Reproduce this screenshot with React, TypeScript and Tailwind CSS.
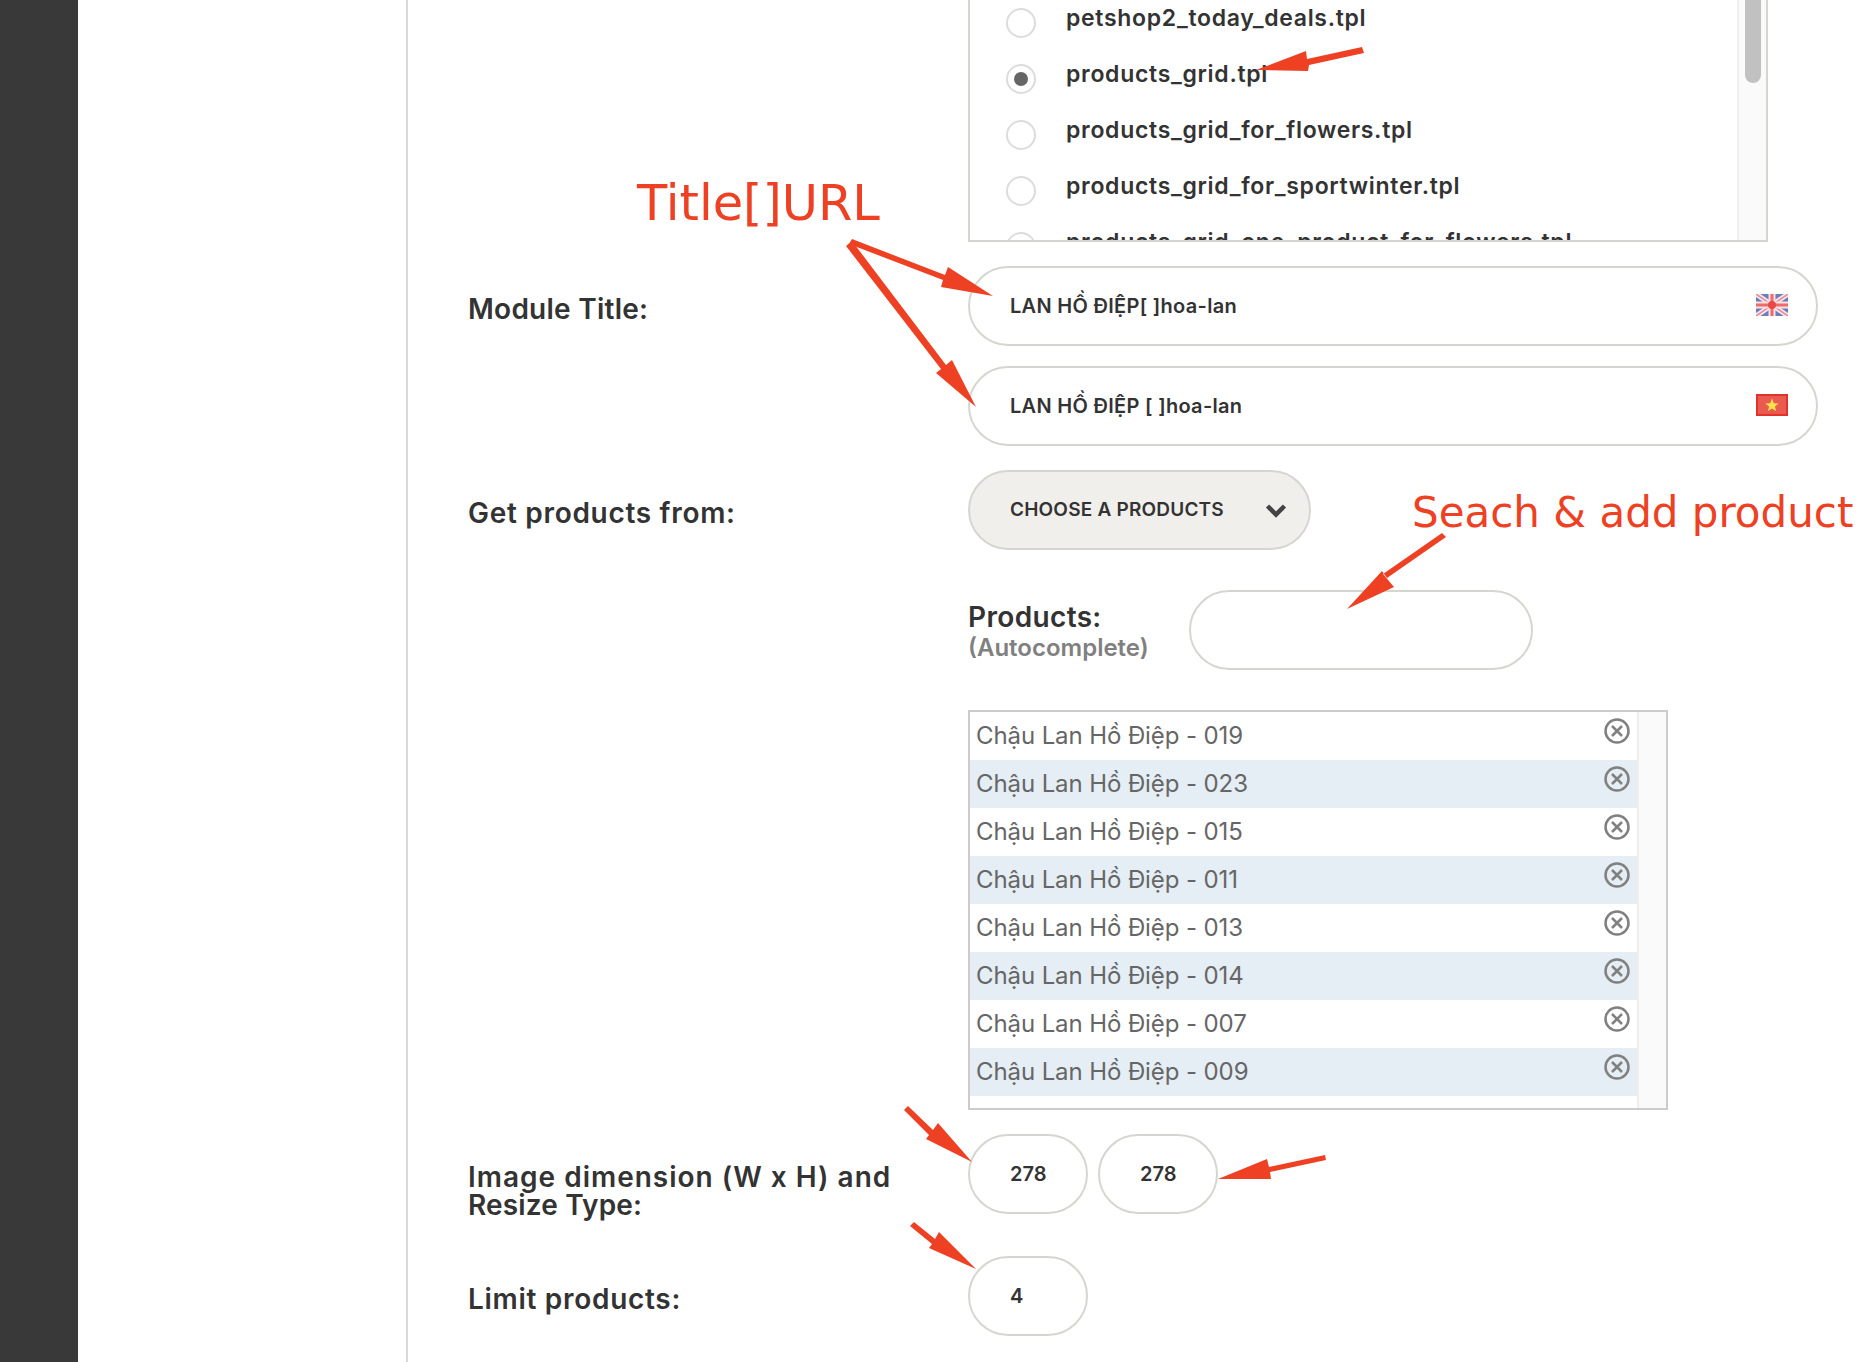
import React from "react";

const radios = [
  { name: "petshop2_today_deals.tpl" },
  { name: "products_grid.tpl", on: true },
  { name: "products_grid_for_flowers.tpl" },
  { name: "products_grid_for_sportwinter.tpl" },
  { name: "products_grid_one_product_for_flowers.tpl" },
];
const products = ["019", "023", "015", "011", "013", "014", "007", "009"];

function Flag({ kind }: { kind: "uk" | "vn" }) {
  if (kind === "vn") {
    return (
      <svg width="32" height="22" viewBox="0 0 32 22" className="-mt-[2px] shrink-0 blur-[0.4px]">
        <rect width="32" height="22" fill="#e2332a" />
        <rect x="2" y="2" width="28" height="18" fill="#ea5a50" />
        <polygon points="16,4.5 17.8,9.2 22.8,9.4 18.9,12.5 20.2,17.3 16,14.6 11.8,17.3 13.1,12.5 9.2,9.4 14.2,9.2" fill="#fbe24a" />
      </svg>
    );
  }
  return (
    <svg width="32" height="22" viewBox="0 0 32 22" className="-mt-[2px] shrink-0 blur-[0.6px]">
      <rect width="32" height="22" fill="#6f7cbc" />
      <path d="M0 0L32 22M32 0L0 22" stroke="#f3e6ea" strokeWidth="5" />
      <path d="M0 0L32 22M32 0L0 22" stroke="#ea8c9a" strokeWidth="1.5" />
      <path d="M16 0V22M0 11H32" stroke="#f7e3e3" strokeWidth="7" />
      <path d="M16 0V22M0 11H32" stroke="#ef6a6a" strokeWidth="3" />
      <circle cx="16" cy="11" r="4" fill="#e84a4a" />
    </svg>
  );
}

function Label({ children, className = "pt-[29px] tracking-[0.7px]" }: { children: React.ReactNode; className?: string }) {
  return (
    <div className={`w-[500px] shrink-0 text-[28px] leading-[28px] font-semibold text-[#333] ${className}`}>
      {children}
    </div>
  );
}

function Pill({ className, children }: { className: string; children?: React.ReactNode }) {
  return (
    <div className={`flex h-[80px] items-center rounded-[40px] border-2 border-[#d6d6d1] pl-[40px] text-[20px] font-semibold text-[#333] ${className}`}>
      {children}
    </div>
  );
}

function Arrow({ d }: { d: string }) {
  return <path d={d} fill="#ee4023" />;
}

export default function App() {
  return (
    <div className="relative flex h-[1362px] w-[1856px] overflow-hidden bg-white font-['Inter','Noto_Sans',sans-serif]">
      <div className="h-full w-[78px] shrink-0 bg-[#393939]" />
      <div className="h-full w-[330px] shrink-0 border-r-2 border-[#d9d9d9]" />
      <div className="flex-1 pl-[60px]">
        <div className="flex">
          <div className="w-[500px] shrink-0" />
          <div className="flex h-[242px] w-[800px] overflow-hidden border-x-2 border-b-2 border-[#d6d6d1]">
            <div className="-mt-[9px] flex-1 pl-[36px]">
              {radios.map((r) => (
                <div key={r.name} className="flex h-[56px] items-center gap-[30px] pb-[2px]">
                  <span className="mt-[10px] flex h-[30px] w-[30px] shrink-0 items-center justify-center rounded-full border-2 border-[#dcdcdc]">
                    {r.on && <span className="h-[14px] w-[14px] rounded-full bg-[#666]" />}
                  </span>
                  <span className="whitespace-nowrap text-[23px] font-semibold tracking-[0.7px] text-[#333]">{r.name}</span>
                </div>
              ))}
            </div>
            <div className="w-[29px] shrink-0 border-l-2 border-[#eeeeee] bg-[#fafafa] pl-[6px]">
              <div className="h-[83px] w-[16px] rounded-b-[8px] bg-[#c1c1c1]" />
            </div>
          </div>
        </div>

        <div className="mt-[24px] flex">
          <Label className="pt-[29px] tracking-[0.25px]">Module Title:</Label>
          <div className="flex flex-col gap-[20px]">
            <Pill className="w-[850px] justify-between pr-[28px]">
              <span className="tracking-[0.3px]">LAN HỒ ĐIỆP[ ]hoa-lan</span>
              <Flag kind="uk" />
            </Pill>
            <Pill className="w-[850px] justify-between pr-[28px]">
              <span className="tracking-[0.3px]">LAN HỒ ĐIỆP [ ]hoa-lan</span>
              <Flag kind="vn" />
            </Pill>
          </div>
        </div>

        <div className="mt-[24px] flex">
          <Label>Get products from:</Label>
          <Pill className="w-[343px] justify-between bg-[#f0efec] pr-[22px]">
            <span className="pt-[1px] text-[19px] tracking-[0.2px]">CHOOSE A PRODUCTS</span>
            <svg width="22" height="15" viewBox="0 0 22 15">
              <path d="M2.5 3L11 11.5L19.5 3" fill="none" stroke="#444" strokeWidth="4.5" />
            </svg>
          </Pill>
        </div>

        <div className="mt-[40px] ml-[500px] flex h-[80px] items-start">
          <div className="w-[221px] shrink-0 pt-[13px]">
            <div className="text-[28px] leading-[28px] font-semibold tracking-[0.35px] text-[#333]">Products:</div>
            <div className="mt-[3px] text-[24px] leading-[28px] font-semibold text-[#808080]">(Autocomplete)</div>
          </div>
          <Pill className="w-[344px]" />
        </div>

        <div className="mt-[40px] ml-[500px] flex h-[400px] w-[700px] border-2 border-[#cccccc]">
          <div className="flex-1">
            {products.map((p, i) => (
              <div key={p} className={`flex h-[48px] justify-between pl-[6px] pr-[7px] ${i % 2 ? "bg-[#e5edf5]" : "bg-white"}`}>
                <span className="pt-[8px] text-[24px] leading-[32px] tracking-[-0.1px] text-[#666]">Chậu Lan Hồ Điệp - {p}</span>
                <svg width="26" height="26" viewBox="0 0 26 26" className="mt-[6px]">
                  <circle cx="13" cy="13" r="11.5" fill="none" stroke="#808080" strokeWidth="2.5" />
                  <path d="M8 8L18 18M18 8L8 18" stroke="#808080" strokeWidth="2.5" />
                </svg>
              </div>
            ))}
          </div>
          <div className="w-[29px] shrink-0 border-l-2 border-[#eeeeee] bg-[#fafafa]" />
        </div>

        <div className="mt-[24px] flex">
          <Label className="pt-[29px] tracking-[1px]">Image dimension (W x H) and<br /><span className="tracking-[0.15px]">Resize Type:</span></Label>
          <div className="flex gap-[10px]">
            <Pill className="w-[120px]">278</Pill>
            <Pill className="w-[120px]">278</Pill>
          </div>
        </div>

        <div className="mt-[37px] flex">
          <Label className="pt-[29px] tracking-[0.7px]">Limit products:</Label>
          <Pill className="w-[120px]">4</Pill>
        </div>
      </div>

      <span className="absolute left-[637px] top-[173px] text-[49.5px] leading-[60px] text-[#ee4023] font-['DejaVu_Sans',sans-serif]">Title[]URL</span>
      <span className="absolute left-[1412px] top-[483px] whitespace-nowrap text-[42px] leading-[60px] text-[#ee4023] font-['DejaVu_Sans',sans-serif]">Seach &amp; add product</span>

      <svg className="pointer-events-none absolute left-0 top-0" width="1856" height="1362" viewBox="0 0 1856 1362">
        <Arrow d="M1256,70 L1306,51 L1307,59 L1362,47 L1364,53 L1309,65 L1308,71 Z" />
        <Arrow d="M993,296 L948,267 L945,275 L852,239 L849,244 L943,280 L941,287 Z" />
        <Arrow d="M976,407 L952,360 L946,365 L852,241 L846,246 L941,369 L936,373 Z" />
        <Arrow d="M1347,609 L1382,571 L1387,578 L1446,537 L1442,533 L1383,574 L1394,587 Z" />
        <Arrow d="M972,1162 L938,1123 L933,1130 L908,1106 L904,1110 L929,1135 L926,1139 Z" />
        <Arrow d="M1218,1179 L1267,1159 L1269,1167 L1325,1155 L1326,1160 L1270,1172 L1271,1179 Z" />
        <Arrow d="M976,1269 L939,1232 L935,1239 L914,1222 L910,1226 L932,1244 L929,1248 Z" />
      </svg>
    </div>
  );
}
